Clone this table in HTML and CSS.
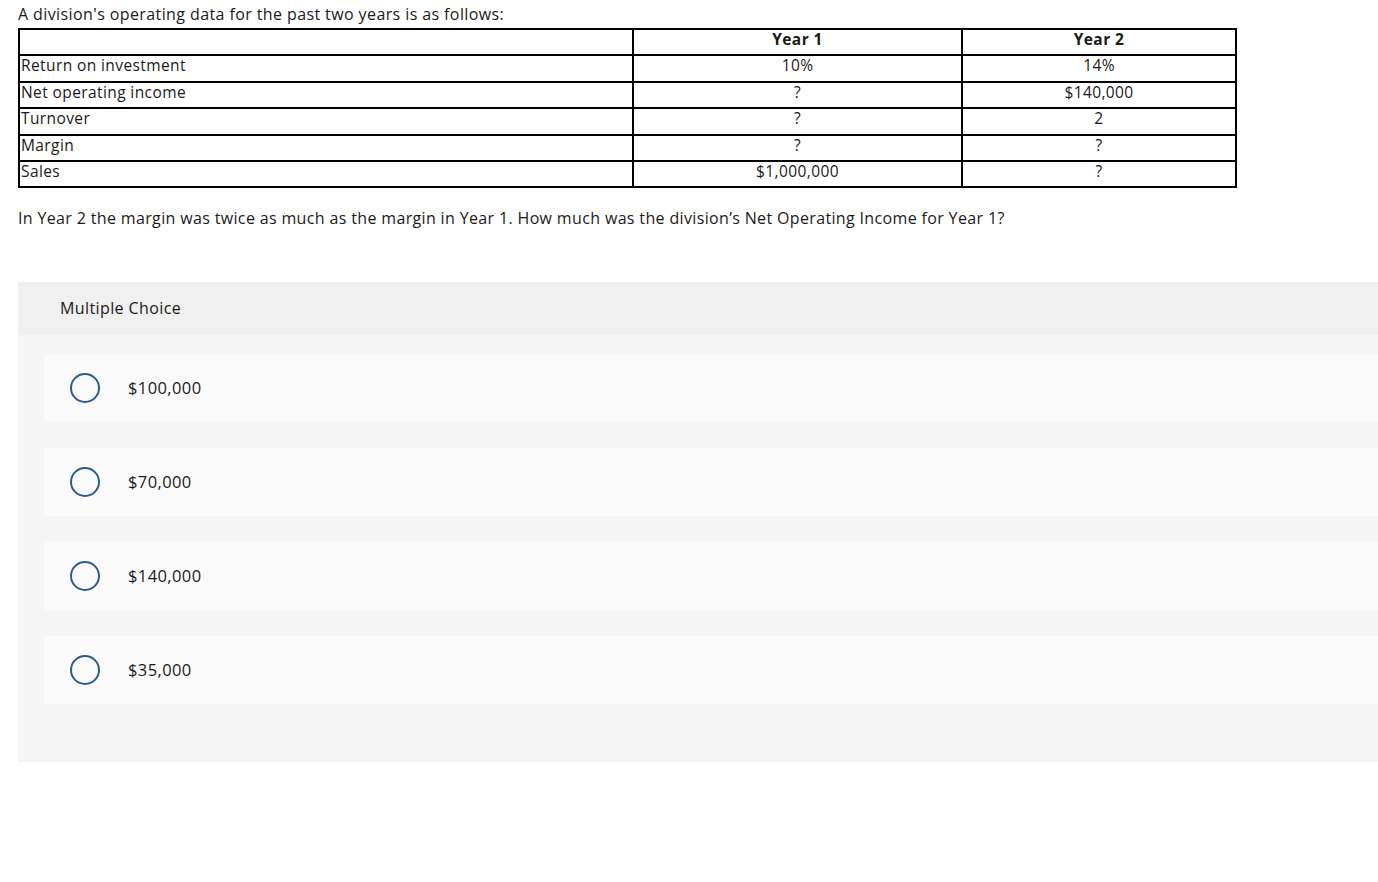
FILE: index.html
```html
<!DOCTYPE html>
<html>
<head>
<meta charset="utf-8">
<link rel="stylesheet" href="styles.css">
</head>
<body>
<div class="page">
  <p class="intro">A division's operating data for the past two years is as follows:</p>
  <table class="data">
    <colgroup><col class="c1"><col class="c2"><col class="c3"></colgroup>
    <tr><th></th><th>Year 1</th><th>Year 2</th></tr>
    <tr><td>Return on investment</td><td class="num">10%</td><td class="num">14%</td></tr>
    <tr><td>Net operating income</td><td class="num">?</td><td class="num">$140,000</td></tr>
    <tr><td>Turnover</td><td class="num">?</td><td class="num">2</td></tr>
    <tr><td>Margin</td><td class="num">?</td><td class="num">?</td></tr>
    <tr><td>Sales</td><td class="num">$1,000,000</td><td class="num">?</td></tr>
  </table>
  <p class="question">In Year 2 the margin was twice as much as the margin in Year 1. How much was the division’s Net Operating Income for Year 1?</p>
  <div class="mc">
    <div class="mc-head">Multiple Choice</div>
    <div class="mc-body">
      <div class="opt"><span class="radio"></span><span class="label">$100,000</span></div>
      <div class="opt"><span class="radio"></span><span class="label">$70,000</span></div>
      <div class="opt"><span class="radio"></span><span class="label">$140,000</span></div>
      <div class="opt"><span class="radio"></span><span class="label">$35,000</span></div>
    </div>
  </div>
</div>
</body>
</html>
```

FILE: styles.css
```css
html, body { margin: 0; padding: 0; background: #fff; }
body { font-family: "Open Sans", "Lato", sans-serif; color: #1a1a1a; letter-spacing: 0.4px; }
.page { padding: 3px 0 0 18px; }
.intro { margin: 0; font-size: 16px; line-height: 22px; height: 25px; }
.data { border-collapse: collapse; width: 1217px; font-size: 15.5px; table-layout: fixed; }
.c1 { width: 614px; }
.c2 { width: 329px; }
.c3 { width: 274px; }
.data th, .data td { border: 2px solid #000; padding: 0 1px; height: 24.4px; line-height: 19px; vertical-align: top; text-align: left; font-weight: normal; }
.data th { text-align: center; font-weight: bold; }
.data td.num { text-align: center; }
.question { margin: 19px 0 0; font-size: 16px; line-height: 22px; letter-spacing: 0.35px; }
.mc { margin-top: 53px; background: #f5f5f5; padding-bottom: 58px; }
.mc-head { background: #f0f0f0; height: 53px; line-height: 52px; padding-left: 42px; font-size: 16px; }
.mc-body { padding: 19px 0 0 26px; display: flex; flex-direction: column; gap: 26px; }
.opt { background: #fafafa; height: 68px; display: flex; align-items: center; padding-left: 26px; }
.radio { width: 26px; height: 26px; border: 2px solid #2c5b8e; border-radius: 50%; flex: none; }
.label { margin-left: 28px; font-size: 16.5px; line-height: 20px; }
```
